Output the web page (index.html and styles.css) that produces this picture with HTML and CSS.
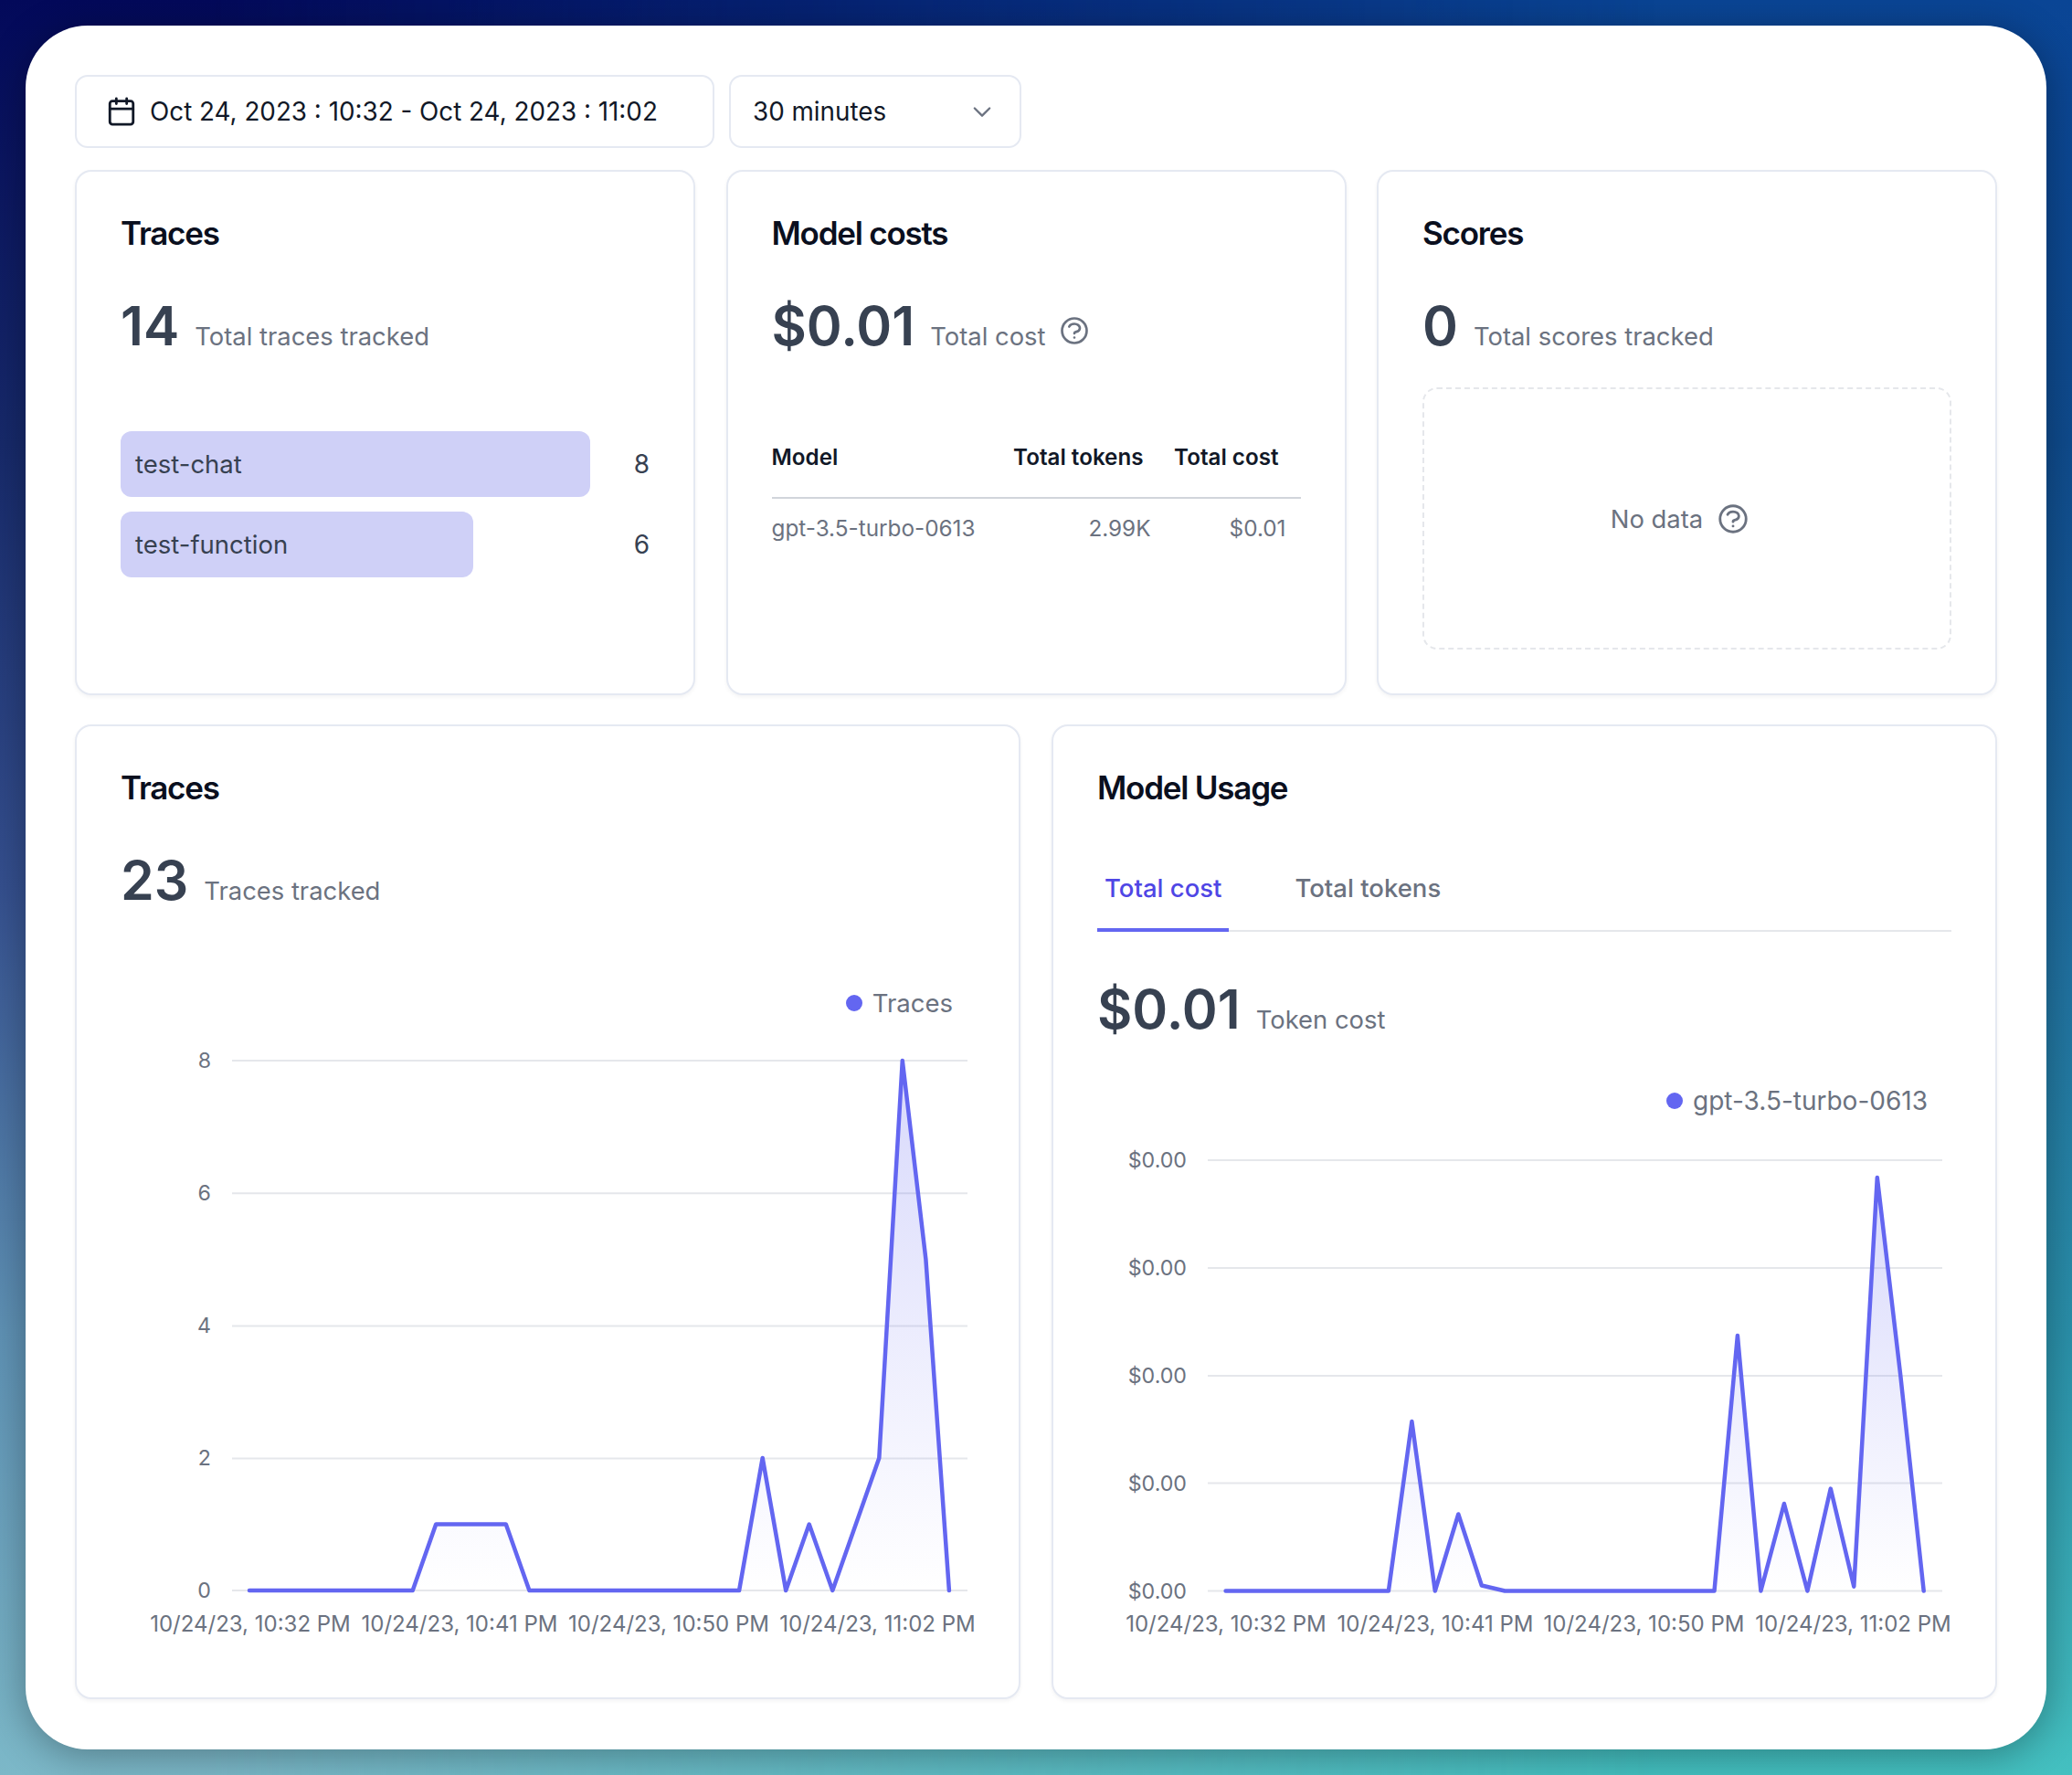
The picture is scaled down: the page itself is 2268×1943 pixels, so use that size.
FILE: index.html

```html
<!DOCTYPE html>
<html>
<head>
    <meta charset="utf-8">
    <title>Dashboard</title>
    <link rel="stylesheet" href="styles.css">
</head>
<body>
<div class="window">
    <div class="toolbar">
        <div class="picker date-picker">
            <svg class="cal-icon" viewBox="0 0 24 24"><rect x="3" y="4" width="18" height="18" rx="2"/><path d="M16 2v4M8 2v4M3 10h18"/></svg>
            <span>Oct 24, 2023 : 10:32 - Oct 24, 2023 : 11:02</span>
        </div>
        <div class="picker range-picker">
            <span>30 minutes</span>
            <svg class="chevron" viewBox="0 0 24 24"><path d="M5 9l7 7 7-7"/></svg>
        </div>
    </div>

    <div class="row-top">
        <div class="card">
            <h2 class="title">Traces</h2>
            <div class="metric"><b>14</b><span>Total traces tracked</span></div>
            <div class="bars">
                <div class="bar-row">
                    <div class="bar-track"><div class="bar" style="width:100%">test-chat</div></div>
                    <span class="bar-value">8</span>
                </div>
                <div class="bar-row">
                    <div class="bar-track"><div class="bar" style="width:75%">test-function</div></div>
                    <span class="bar-value">6</span>
                </div>
            </div>
        </div>

        <div class="card">
            <h2 class="title">Model costs</h2>
            <div class="metric"><b>$0.01</b><span>Total cost</span>
                <svg class="help metric-help" viewBox="0 0 24 24"><path d="M8.228 9c.549-1.165 2.03-2 3.772-2 2.21 0 4 1.343 4 3 0 1.4-1.278 2.575-3.006 2.907-.542.104-.994.54-.994 1.093m0 3h.01M21 12a9 9 0 11-18 0 9 9 0 0118 0z"/></svg>
            </div>
            <table class="costs">
                <thead>
                    <tr><th class="c-model">Model</th><th class="c-tokens">Total tokens</th><th class="c-cost">Total cost</th></tr>
                </thead>
                <tbody>
                    <tr><td class="c-model">gpt-3.5-turbo-0613</td><td class="c-tokens">2.99K</td><td class="c-cost">$0.01</td></tr>
                </tbody>
            </table>
        </div>

        <div class="card">
            <h2 class="title">Scores</h2>
            <div class="metric"><b>0</b><span>Total scores tracked</span></div>
            <div class="no-data">
                <span>No data</span>
                <svg class="help" viewBox="0 0 24 24"><path d="M8.228 9c.549-1.165 2.03-2 3.772-2 2.21 0 4 1.343 4 3 0 1.4-1.278 2.575-3.006 2.907-.542.104-.994.54-.994 1.093m0 3h.01M21 12a9 9 0 11-18 0 9 9 0 0118 0z"/></svg>
            </div>
        </div>
    </div>

    <div class="row-bottom">
        <div class="card">
            <h2 class="title">Traces</h2>
            <div class="metric"><b>23</b><span>Traces tracked</span></div>
            <div class="legend legend-traces"><i></i>Traces</div>
            <svg class="chart chart-traces" viewBox="-1 0 935 670">
                <defs>
                    <linearGradient id="fade1" x1="0" y1="0" x2="0" y2="1">
                        <stop offset="0" stop-color="#6366f1" stop-opacity="0.25"/>
                        <stop offset="1" stop-color="#6366f1" stop-opacity="0"/>
                    </linearGradient>
                </defs>
                <g class="grid">
                    <line x1="121" x2="926" y1="31" y2="31"/>
                    <line x1="121" x2="926" y1="176.3" y2="176.3"/>
                    <line x1="121" x2="926" y1="321.5" y2="321.5"/>
                    <line x1="121" x2="926" y1="466.5" y2="466.5"/>
                    <line x1="121" x2="926" y1="611" y2="611"/>
                </g>
                <polygon fill="url(#fade1)" points="140,611 318.7,611 344.2,538.5 420.8,538.5 446.4,611 676.1,611 701.7,466 727.2,611 752.7,538.5 778.3,611 803.8,538.5 829.3,466 854.8,31 880.4,248.5 905.9,611"/>
                <polyline class="line" points="140,611 318.7,611 344.2,538.5 420.8,538.5 446.4,611 676.1,611 701.7,466 727.2,611 752.7,538.5 778.3,611 803.8,538.5 829.3,466 854.8,31 880.4,248.5 905.9,611"/>
                <g class="ticks-y">
                    <text x="98" y="31">8</text>
                    <text x="98" y="176">6</text>
                    <text x="98" y="321">4</text>
                    <text x="98" y="466">2</text>
                    <text x="98" y="611">0</text>
                </g>
                <g class="ticks-x">
                    <text x="141" y="647">10/24/23, 10:32 PM</text>
                    <text x="370" y="647">10/24/23, 10:41 PM</text>
                    <text x="599" y="647">10/24/23, 10:50 PM</text>
                    <text x="827.5" y="647">10/24/23, 11:02 PM</text>
                </g>
            </svg>
        </div>

        <div class="card">
            <h2 class="title">Model Usage</h2>
            <div class="tabs">
                <div class="tab active">Total cost</div>
                <div class="tab">Total tokens</div>
            </div>
            <div class="metric metric-usage"><b>$0.01</b><span>Token cost</span></div>
            <div class="legend legend-usage"><i></i>gpt-3.5-turbo-0613</div>
            <svg class="chart chart-usage" viewBox="0 0 935 560">
                <defs>
                    <linearGradient id="fade2" x1="0" y1="0" x2="0" y2="1">
                        <stop offset="0" stop-color="#6366f1" stop-opacity="0.25"/>
                        <stop offset="1" stop-color="#6366f1" stop-opacity="0"/>
                    </linearGradient>
                </defs>
                <g class="grid">
                    <line x1="121" x2="925" y1="30" y2="30"/>
                    <line x1="121" x2="925" y1="148" y2="148"/>
                    <line x1="121" x2="925" y1="266" y2="266"/>
                    <line x1="121" x2="925" y1="383.5" y2="383.5"/>
                    <line x1="121" x2="925" y1="501.5" y2="501.5"/>
                </g>
                <polygon fill="url(#fade2)" points="140.6,501.5 318.9,501.5 344.4,316 369.8,501.5 395.3,417.5 420.8,495.5 446.2,501.5 675.5,501.5 700.9,222 726.4,501.5 751.9,406 777.4,501.5 802.8,389.6 828.3,496.7 853.8,49 879.2,265 904.7,501.5"/>
                <polyline class="line" points="140.6,501.5 318.9,501.5 344.4,316 369.8,501.5 395.3,417.5 420.8,495.5 446.2,501.5 675.5,501.5 700.9,222 726.4,501.5 751.9,406 777.4,501.5 802.8,389.6 828.3,496.7 853.8,49 879.2,265 904.7,501.5"/>
                <g class="ticks-y">
                    <text x="98" y="30">$0.00</text>
                    <text x="98" y="148">$0.00</text>
                    <text x="98" y="266">$0.00</text>
                    <text x="98" y="383.5">$0.00</text>
                    <text x="98" y="501.5">$0.00</text>
                </g>
                <g class="ticks-x">
                    <text x="141" y="537">10/24/23, 10:32 PM</text>
                    <text x="370" y="537">10/24/23, 10:41 PM</text>
                    <text x="598.5" y="537">10/24/23, 10:50 PM</text>
                    <text x="827.5" y="537">10/24/23, 11:02 PM</text>
                </g>
            </svg>
        </div>
    </div>
</div>
</body>
</html>
```

FILE: styles.css

```css
*{
    margin: 0px;
    padding: 0px;
    box-sizing: border-box;
}
html, body{
    height: 100%;
}
body{
    width: 2268px;
    height: 1943px;
    padding: 28px;
    overflow: hidden;
    font-family: Inter, "Liberation Sans", sans-serif;
    background: linear-gradient(180deg, #0a4595 0%, #0f4b8d 25%, #1e6a9e 50%, #2a90aa 75%, #44c0c0 100%);
}
/* left side of the backdrop, faded out towards the right */
body::before{
    content: "";
    position: absolute;
    top: 0;
    left: 0;
    width: 2268px;
    height: 1943px;
    z-index: -1;
    background: linear-gradient(180deg, #03095a 0%, #172a6b 25%, #35508f 50%, #5f92b5 75%, #7cb8c8 100%);
    -webkit-mask-image: linear-gradient(90deg, #000 10%, transparent 80%);
    mask-image: linear-gradient(90deg, #000 10%, transparent 80%);
}
.window{
    width: 2212px;
    height: 1887px;
    padding: 54px;
    display: flex;
    flex-direction: column;
    background: #fff;
    border-radius: 68px;
    box-shadow: 0 6px 44px rgba(0,0,0,0.32);
}

/* top pickers */
.toolbar{
    display: flex;
    gap: 16px;
    height: 80px;
    margin-bottom: 24px;
}
.picker{
    display: flex;
    align-items: center;
    border: 2px solid #e5e9f2;
    border-radius: 14px;
    font-size: 27.8px;
    color: #111827;
}
.date-picker{
    width: 700px;
    padding-left: 32px;
    gap: 14px;
}
.range-picker{
    width: 320px;
    padding: 0 27px 0 24px;
    justify-content: space-between;
}
.cal-icon{
    width: 34px;
    height: 34px;
    fill: none;
    stroke: #111827;
    stroke-width: 2;
    stroke-linecap: round;
    stroke-linejoin: round;
}
.chevron{
    width: 28px;
    height: 28px;
    fill: none;
    stroke: #6b7280;
    stroke-width: 2;
    stroke-linecap: round;
    stroke-linejoin: round;
}

/* cards */
.row-top{
    display: grid;
    grid-template-columns: repeat(3, 679px);
    gap: 33.5px;
    height: 575px;
    margin-bottom: 32px;
}
.row-bottom{
    display: grid;
    grid-template-columns: repeat(2, 1035px);
    gap: 34px;
    height: 1067px;
}
.card{
    padding: 49px 48px 48px;
    border: 2px solid #e5e9f2;
    border-radius: 18px;
    background: #fff;
    box-shadow: 0 2px 4px rgba(15,23,42,0.05);
}
.title{
    height: 36px;
    font-size: 35px;
    line-height: 36px;
    font-weight: 600;
    letter-spacing: -0.035em;
    color: #0a0f1e;
}
.metric{
    display: flex;
    align-items: baseline;
    margin-top: 48px;
    height: 72px;
    line-height: 72px;
}
.metric b{
    font-size: 59px;
    font-weight: 600;
    color: #374151;
    margin-right: 17px;
}
.metric span{
    font-size: 27.4px;
    color: #6b7280;
}
.metric-usage{
    margin-top: 49px;
}
.help{
    width: 38px;
    height: 38px;
    fill: none;
    stroke: #6b7280;
    stroke-width: 1.8;
    stroke-linecap: round;
    stroke-linejoin: round;
}
.metric-help{
    width: 36px;
    height: 36px;
    margin-left: 14px;
    align-self: center;
    margin-top: 10px;
}

/* tracked names */
.bars{
    margin-top: 79px;
    display: flex;
    flex-direction: column;
    gap: 16px;
}
.bar-row{
    display: flex;
    align-items: center;
    justify-content: space-between;
}
.bar-track{
    width: 514px;
}
.bar{
    height: 72px;
    line-height: 72px;
    padding-left: 16px;
    border-radius: 12px;
    background: #cfd0f7;
    font-size: 27.5px;
    color: #374151;
}
.bar-value{
    font-size: 28px;
    color: #374151;
}

/* model table */
.costs{
    width: 579px;
    margin-top: 90px;
    table-layout: fixed;
    border-collapse: collapse;
    font-size: 24.2px;
}
.costs th{
    height: 61px;
    padding: 0 24px 25px 0;
    border-bottom: 2px solid #d1d5db;
    font-weight: 600;
    line-height: 36px;
    color: #111827;
    text-align: right;
}
.costs td{
    padding: 14px 16px 0 0;
    line-height: 36px;
    font-size: 24.3px;
    color: #6b7280;
    text-align: right;
}
.costs .c-model{
    width: 264px;
    text-align: left;
}
.costs .c-tokens{
    width: 167px;
}
.costs .c-cost{
    width: 148px;
}

.no-data{
    height: 287px;
    margin-top: 31px;
    padding-right: 14px;
    display: flex;
    align-items: center;
    justify-content: center;
    gap: 14px;
    border: 2px dashed #e5e7eb;
    border-radius: 16px;
    font-size: 27.4px;
    color: #6b7280;
}

/* tabs */
.tabs{
    display: flex;
    gap: 64px;
    margin-top: 72px;
    height: 68px;
    border-bottom: 2px solid #e5e7eb;
}
.tab{
    height: 68px;
    padding: 0 8px 24px;
    line-height: 40px;
    border-bottom: 4px solid transparent;
    font-size: 27.5px;
    font-weight: 500;
    color: #6b7280;
}
.tab.active{
    color: #4f46e5;
    border-bottom-color: #6366f1;
}

/* charts */
.legend{
    display: flex;
    align-items: center;
    justify-content: flex-end;
    gap: 11px;
    height: 40px;
    padding-right: 26px;
    font-size: 27.5px;
    color: #6b7280;
}
.legend i{
    width: 18px;
    height: 18px;
    border-radius: 50%;
    background: #6366f1;
}
.legend-traces{
    margin-top: 78px;
    padding-right: 24px;
}
.legend-usage{
    margin-top: 44px;
    font-size: 28px;
}
.chart{
    display: block;
    width: 935px;
}
.chart-traces{
    height: 670px;
    margin-top: 12px;
}
.chart-usage{
    height: 560px;
    margin-top: 15px;
}
.grid line{
    stroke: #e5e7eb;
    stroke-width: 2;
}
.line{
    fill: none;
    stroke: #6366f1;
    stroke-width: 4.5;
    stroke-linejoin: round;
    stroke-linecap: round;
}
.chart text{
    font-family: Inter, "Liberation Sans", sans-serif;
    font-size: 24px;
    fill: #6b7280;
    dominant-baseline: central;
}
.ticks-y text{
    font-size: 23.2px;
    text-anchor: end;
}
.ticks-x text{
    text-anchor: middle;
}
```
